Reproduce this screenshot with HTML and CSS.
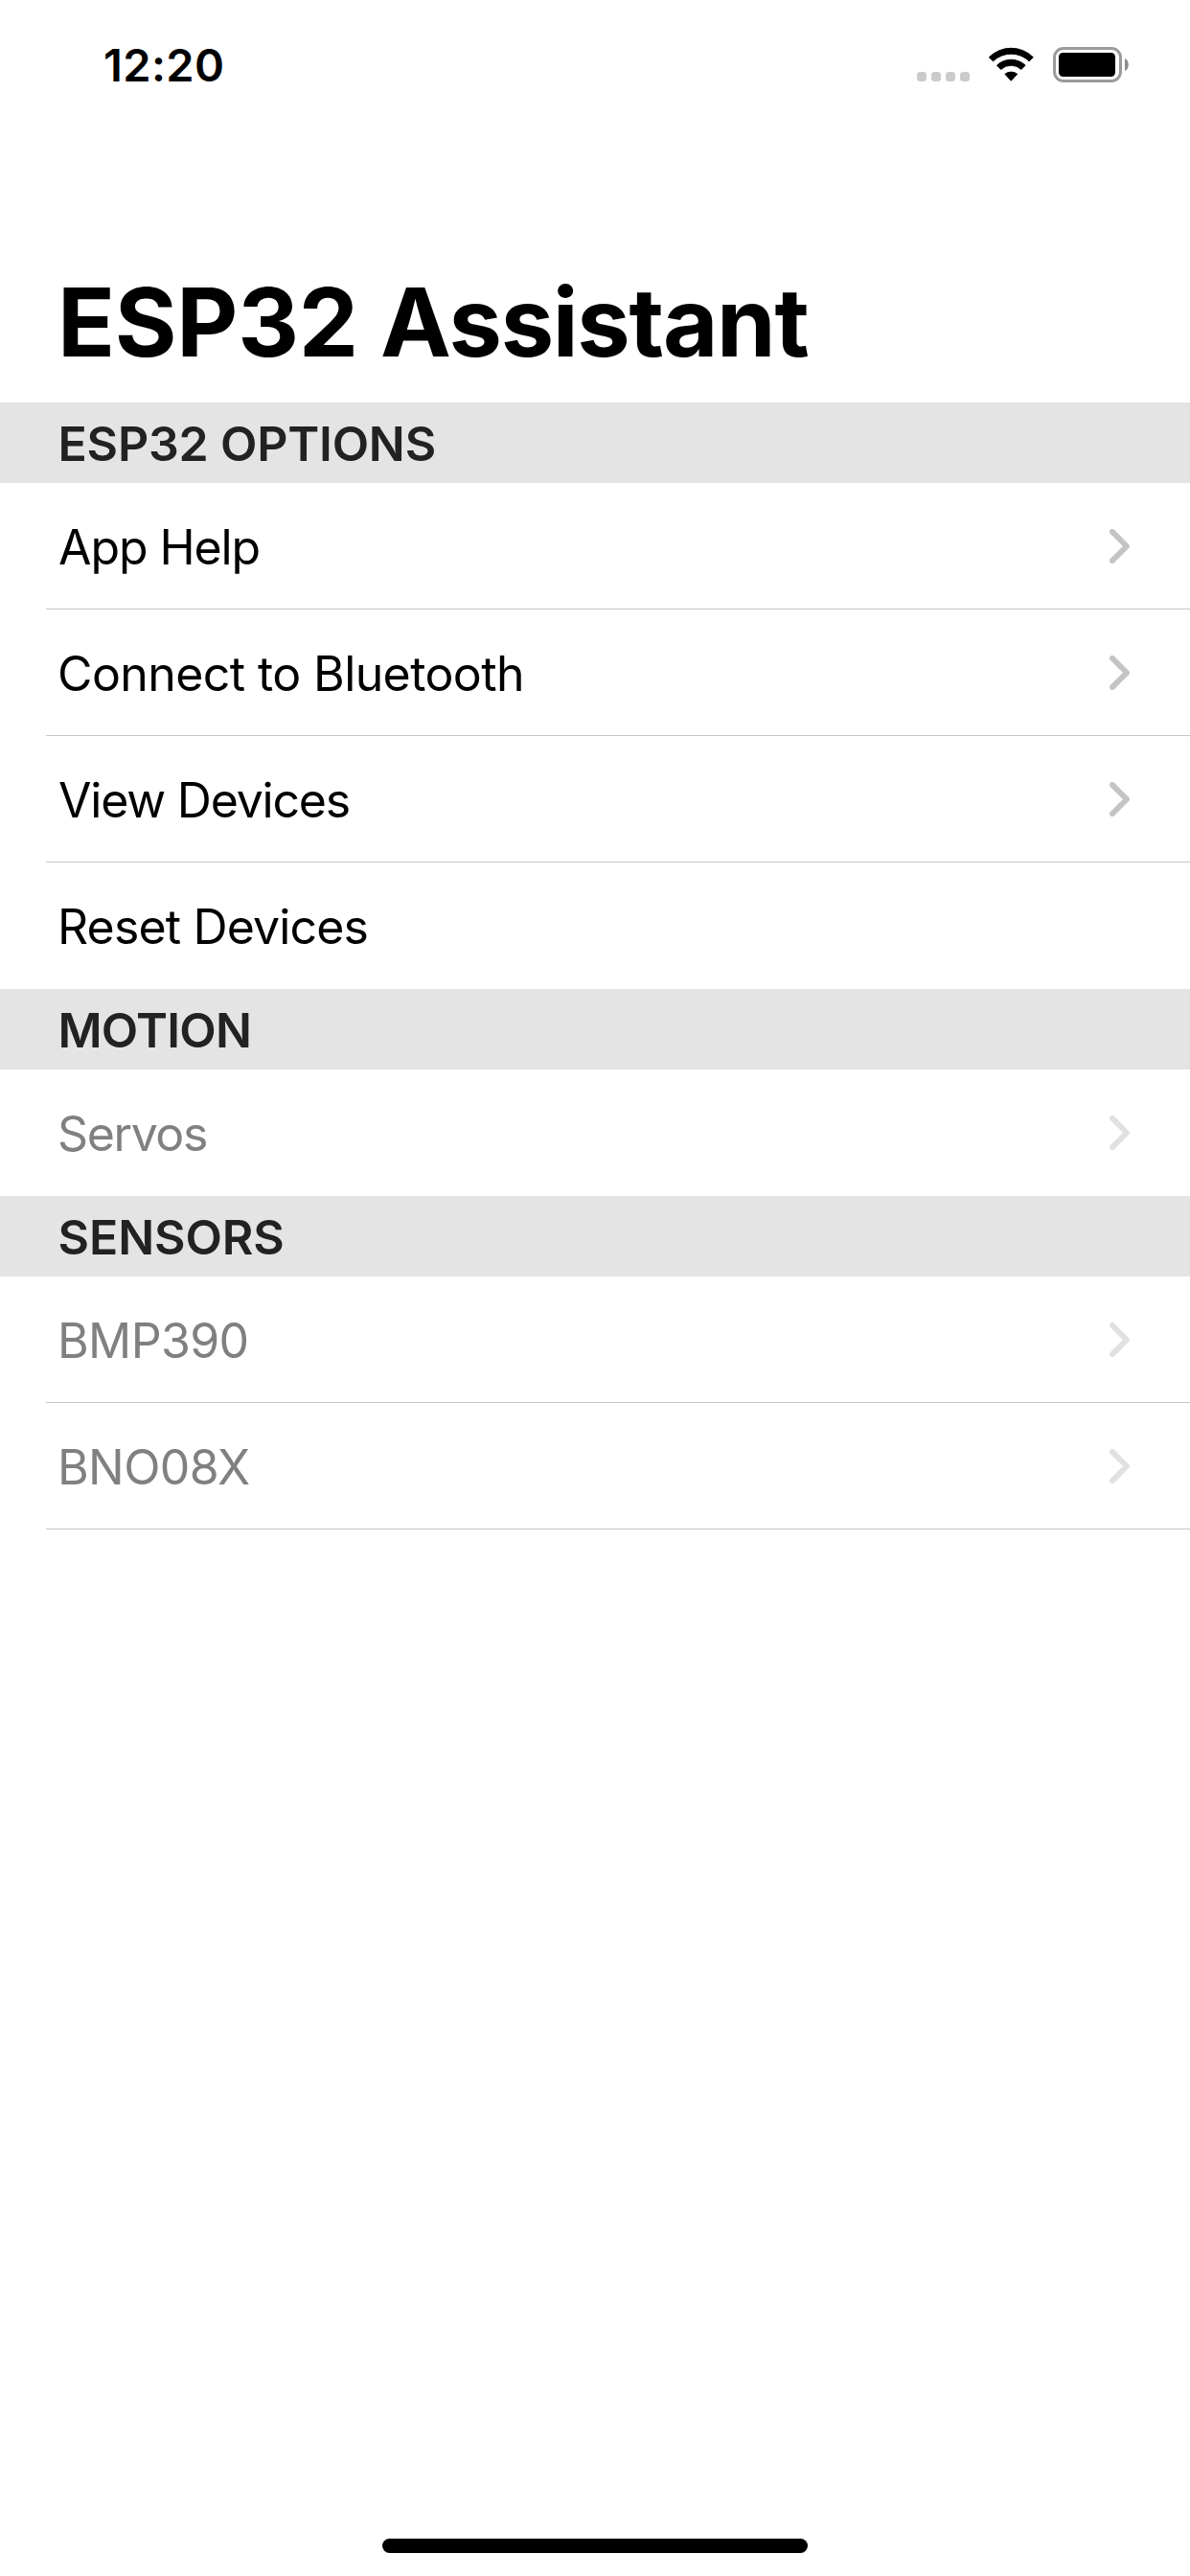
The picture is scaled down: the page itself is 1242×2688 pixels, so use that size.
FILE: index.html
```html
<!DOCTYPE html>
<html lang="en">
<head>
<meta charset="utf-8">
<title>ESP32 Assistant</title>
<link rel="stylesheet" href="styles.css">
</head>
<body>
<svg class="defs" aria-hidden="true">
  <symbol id="chevron" viewBox="0 0 21 36">
    <path d="M2.9 2.9 18 18 2.9 33.1" fill="none" stroke="currentColor" stroke-width="5.8" stroke-linecap="round" stroke-linejoin="round"/>
  </symbol>
</svg>
<div class="screen">
  <header class="status">
    <span class="time">12:20</span>
    <div class="indicators">
      <div class="dots"><i></i><i></i><i></i><i></i></div>
      <svg class="wifi" viewBox="0 0 48 37">
        <g fill="#000" stroke="#000" stroke-width="1" stroke-linejoin="round">
          <path d="M1.3 10.8A32.6 32.6 0 0 1 47.3 10.8L43.1 14.8A27 27 0 0 0 5.5 14.8Z"/>
          <path d="M9.5 19.2A21.5 21.5 0 0 1 39.1 19.2L34.9 23.4A15.5 15.5 0 0 0 13.7 23.4Z"/>
          <path d="M17.9 28.3A10.5 10.5 0 0 1 30.7 28.3L24.3 35.2Z"/>
        </g>
      </svg>
      <svg class="battery" viewBox="0 0 79 37">
        <rect x="1.5" y="1.5" width="69" height="34" rx="9.5" fill="none" stroke="#9b9b9b" stroke-width="3"/>
        <rect x="6" y="6" width="59" height="25" rx="4.5" fill="#000"/>
        <path d="M75 12C80 14 80 23 75 25Z" fill="#8c8c8c"/>
      </svg>
    </div>
  </header>

  <h1 class="title"><span class="model-name">ESP32 </span>Assistant</h1>

  <h2 class="section options">ESP32 OPTIONS</h2>
  <ul class="list">
    <li class="row help"><span>App Help</span><svg class="chevron"><use href="#chevron"/></svg></li>
    <li class="row connect"><span>Connect to Bluetooth</span><svg class="chevron"><use href="#chevron"/></svg></li>
    <li class="row view"><span>View Devices</span><svg class="chevron"><use href="#chevron"/></svg></li>
    <li class="row last reset"><span>Reset Devices</span></li>
  </ul>

  <h2 class="section motion">MOTION</h2>
  <ul class="list disabled">
    <li class="row last servos"><span>Servos</span><svg class="chevron"><use href="#chevron"/></svg></li>
  </ul>

  <h2 class="section sensors">SENSORS</h2>
  <ul class="list disabled">
    <li class="row model"><span>BMP390</span><svg class="chevron"><use href="#chevron"/></svg></li>
    <li class="row model"><span>BNO08X</span><svg class="chevron"><use href="#chevron"/></svg></li>
  </ul>

  <div class="home"></div>
</div>
</body>
</html>
```
FILE: styles.css
```css
* { box-sizing: border-box; }

body {
  margin: 0;
  background: #fff;
  color: #000;
  font-family: Inter, "Liberation Sans", sans-serif;
}

.defs { display: none; }

.screen {
  display: flex;
  flex-direction: column;
  width: 1242px;
  height: 2688px;
  overflow: hidden;
}

.status {
  display: flex;
  justify-content: space-between;
  align-items: flex-start;
  height: 276px;
  padding: 38px 63px 0 108px;
}

.time {
  font-size: 47px;
  font-weight: 600;
  line-height: 60px;
  letter-spacing: 0.39px;
}

.indicators {
  display: flex;
  align-items: flex-end;
  height: 48px;
}

.dots { display: flex; gap: 5px; margin: 0 19px 1px 0; }
.dots i { width: 10px; height: 10px; border-radius: 3.5px; background: #cbcbcb; }
.wifi { width: 48px; height: 37px; margin-right: 20px; }
.battery { width: 79px; height: 37px; margin-right: 1px; }

.title {
  height: 144px;
  margin: 0;
  padding-left: 60px;
  font-size: 99px;
  font-weight: 700;
  line-height: 120px;
  letter-spacing: -1.3px;
}

.model-name { letter-spacing: -0.3px; }

.section {
  height: 84px;
  margin: 0;
  padding: 1px 0 0 60.5px;
  background: #e4e4e4;
  color: #222;
  font-size: 50px;
  font-weight: 600;
  line-height: 84px;
}

.list { margin: 0; padding: 0; list-style: none; }

.row {
  display: flex;
  justify-content: space-between;
  align-items: center;
  height: 132px;
  margin-left: 48px;
  padding: 0 63px 0 12px;
  border-bottom: 1px solid #c6c6c8;
  font-size: 50px;
  line-height: 60px;
}

.row span { padding-top: 2px; }
.row.last { border-bottom-color: transparent; }

.chevron { width: 21px; height: 36px; color: #c4c4c6; }

.disabled { color: #808080; }
.disabled .chevron { color: #e1e1e3; }

/* Optical tracking per label */
.options { letter-spacing: -0.2px; }
.motion { letter-spacing: -0.75px; }
.sensors { letter-spacing: -0.08px; }
.help { padding-left: 13px; letter-spacing: -1.1px; }
.connect { letter-spacing: -0.6px; }
.view { padding-left: 13px; letter-spacing: -1.2px; }
.reset { letter-spacing: -0.85px; }
.servos { letter-spacing: -1.4px; }
.model { letter-spacing: -0.62px; }

.home {
  width: 444px;
  height: 15px;
  margin: auto auto 24px;
  border-radius: 7.5px;
  background: #000;
}
```
